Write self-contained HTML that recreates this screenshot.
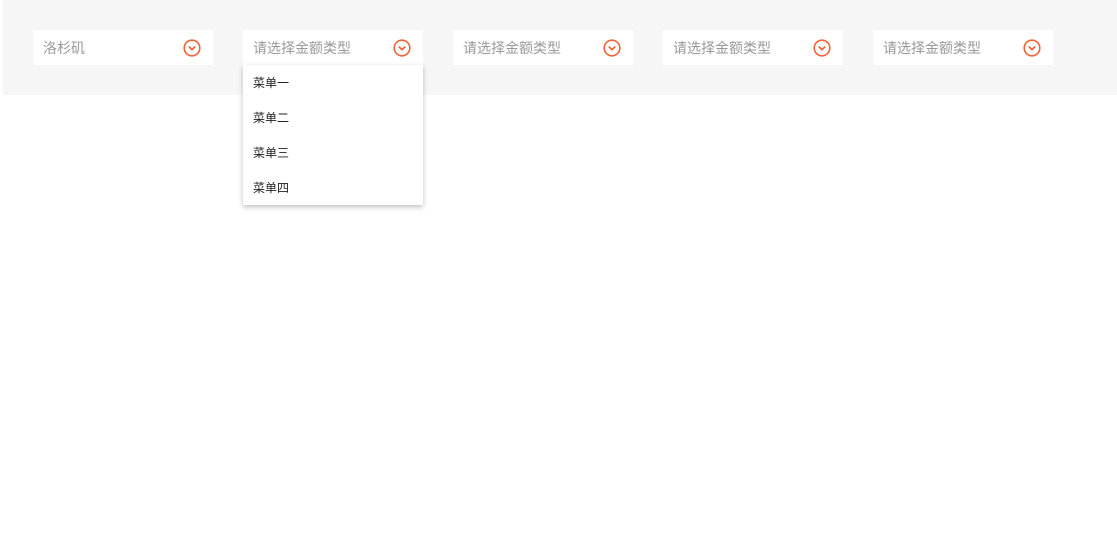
<!DOCTYPE html>
<html><head><meta charset="utf-8"><style>
body{margin:0;width:1117px;height:544px;background:#fff;font-family:"Liberation Sans","Noto Sans CJK SC",sans-serif;position:relative;overflow:hidden}
.bar{position:absolute;left:3px;top:0;width:1114px;height:95px;background:#f6f6f6}
.sel{position:absolute;top:30px;width:180px;height:35px;background:#fff}
.sel span{position:absolute;left:10px;top:10px;font-size:14px;color:#999;line-height:17px}
.sel svg{position:absolute;left:150px;top:9px}
.dd{position:absolute;left:243px;top:65px;width:180px;height:140px;background:#fff;box-shadow:0 2px 5px rgba(0,0,0,.25)}
.dd div{height:35px;line-height:37px;padding-left:10px;font-size:12px;color:#222}
</style></head><body>
<div class="bar"></div>
<div class="sel" style="left:33px"><span>洛杉矶</span><svg width="18" height="18" viewBox="0 0 18 18"><circle cx="9" cy="9" r="7.8" fill="none" stroke="#f0643c" stroke-width="1.6"/><path d="M5.8 7.6L9 10.6L12.2 7.6" fill="none" stroke="#f0643c" stroke-width="1.8"/></svg></div>
<div class="sel" style="left:243px"><span>请选择金额类型</span><svg width="18" height="18" viewBox="0 0 18 18"><circle cx="9" cy="9" r="7.8" fill="none" stroke="#f0643c" stroke-width="1.6"/><path d="M5.8 7.6L9 10.6L12.2 7.6" fill="none" stroke="#f0643c" stroke-width="1.8"/></svg></div>
<div class="sel" style="left:453px"><span>请选择金额类型</span><svg width="18" height="18" viewBox="0 0 18 18"><circle cx="9" cy="9" r="7.8" fill="none" stroke="#f0643c" stroke-width="1.6"/><path d="M5.8 7.6L9 10.6L12.2 7.6" fill="none" stroke="#f0643c" stroke-width="1.8"/></svg></div>
<div class="sel" style="left:663px"><span>请选择金额类型</span><svg width="18" height="18" viewBox="0 0 18 18"><circle cx="9" cy="9" r="7.8" fill="none" stroke="#f0643c" stroke-width="1.6"/><path d="M5.8 7.6L9 10.6L12.2 7.6" fill="none" stroke="#f0643c" stroke-width="1.8"/></svg></div>
<div class="sel" style="left:873px"><span>请选择金额类型</span><svg width="18" height="18" viewBox="0 0 18 18"><circle cx="9" cy="9" r="7.8" fill="none" stroke="#f0643c" stroke-width="1.6"/><path d="M5.8 7.6L9 10.6L12.2 7.6" fill="none" stroke="#f0643c" stroke-width="1.8"/></svg></div>
<div class="dd"><div>菜单一</div><div>菜单二</div><div>菜单三</div><div>菜单四</div></div>
</body></html>
